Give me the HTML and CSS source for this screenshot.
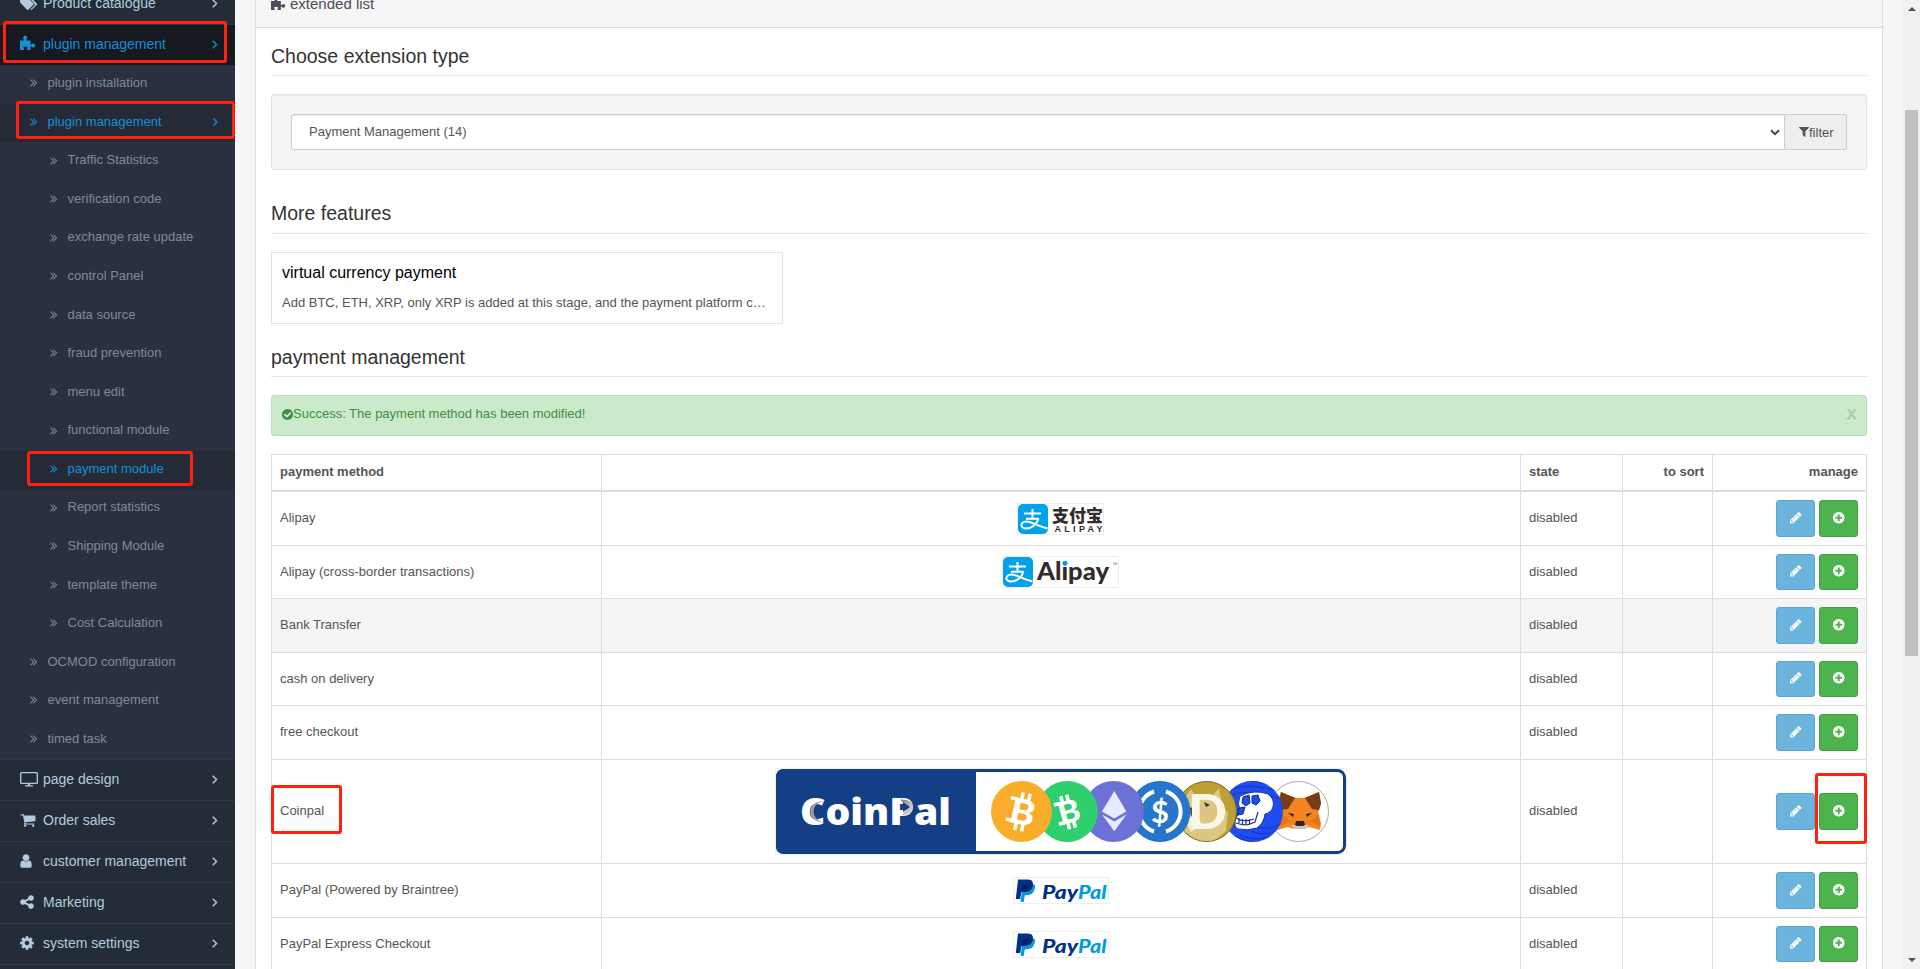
FILE: index.html
```html
<!DOCTYPE html>
<html lang="en">
<head>
<meta charset="utf-8">
<title>Extensions</title>
<link rel="stylesheet" href="styles.css">
</head>
<body>
<svg class="sprite" xmlns="http://www.w3.org/2000/svg">
  <symbol id="right" viewBox="0 0 1792 1792"><path stroke="currentColor" stroke-width="60" d="M1171 960q0 13-10 23l-466 466q-10 10-23 10t-23-10l-50-50q-10-10-10-23t10-23l393-393-393-393q-10-10-10-23t10-23l50-50q10-10 23-10t23 10l466 466q10 10 10 23z"/></symbol>
  <symbol id="dbl" viewBox="384 0 1024 1792"><path d="M979 960q0 13-10 23l-466 466q-10 10-23 10t-23-10l-50-50q-10-10-10-23t10-23l393-393-393-393q-10-10-10-23t10-23l50-50q10-10 23-10t23 10l466 466q10 10 10 23zm384 0q0 13-10 23l-466 466q-10 10-23 10t-23-10l-50-50q-10-10-10-23t10-23l393-393-393-393q-10-10-10-23t10-23l50-50q10-10 23-10t23 10l466 466q10 10 10 23z"/></symbol>
  <symbol id="filter" viewBox="192 0 1408 1792"><path d="M1595 295q17 41-14 70l-493 493v742q0 42-39 59-13 5-25 5-27 0-45-19l-256-256q-19-19-19-45v-486l-493-493q-31-29-14-70 17-39 59-39h1280q42 0 59 39z"/></symbol>
  <symbol id="pencil" viewBox="0 0 1792 1792"><path d="M491 1536l91-91-235-235-91 91v107h128v128h107zm523-928q0-22-22-22-10 0-17 7l-542 542q-7 7-7 17 0 22 22 22 10 0 17-7l542-542q7-7 7-17zm-54-192l416 416-832 832h-416v-416zm683 96q0 53-37 90l-166 166-416-416 166-165q36-38 90-38 53 0 91 38l235 234q37 39 37 91z"/></symbol>
  <symbol id="plus" viewBox="0 0 1792 1792"><path d="M1344 960v-128q0-26-19-45t-45-19h-256v-256q0-26-19-45t-45-19h-128q-26 0-45 19t-19 45v256h-256q-26 0-45 19t-19 45v128q0 26 19 45t45 19h256v256q0 26 19 45t45 19h128q26 0 45-19t19-45v-256h256q26 0 45-19t19-45zm320-64q0 209-103 385.500t-279.500 279.500-385.500 103-385.500-103-279.500-279.500-103-385.500 103-385.500 279.500-279.500 385.500-103 385.500 103 279.500 279.500 103 385.500z"/></symbol>
  <symbol id="check" viewBox="128 0 1536 1792"><path d="M1412 734q0-28-18-46l-91-90q-19-19-45-19t-45 19l-408 407-226-226q-19-19-45-19t-45 19l-91 90q-18 18-18 46 0 27 18 45l362 362q19 19 45 19 27 0 46-19l543-543q18-18 18-45zm252 162q0 209-103 385.500t-279.500 279.500-385.500 103-385.500-103-279.500-279.500-103-385.500 103-385.500 279.500-279.500 385.500-103 385.500 103 279.500 279.500 103 385.500z"/></symbol>
  <symbol id="user" viewBox="0 0 1792 1792"><path d="M1536 1399q0 109-62.500 187t-150.500 78h-854q-88 0-150.500-78t-62.500-187q0-85 8.500-160.500t31.500-152 58.500-131 94-89 134.500-34.500q131 128 313 128t313-128q76 0 134.500 34.500t94 89 58.500 131 31.500 152 8.500 160.500zm-256-887q0 159-112.500 271.500t-271.500 112.500-271.500-112.500-112.500-271.500 112.500-271.500 271.500-112.500 271.500 112.500 112.500 271.500z"/></symbol>
  <symbol id="cog" viewBox="0 0 1792 1792"><path d="M1152 896q0-106-75-181t-181-75-181 75-75 181 75 181 181 75 181-75 75-181zm512-109v222q0 12-8 23t-20 13l-185 28q-19 54-39 91 35 50 107 138 10 12 10 25t-9 23q-27 37-99 108t-94 71q-12 0-26-9l-138-108q-44 23-91 38-16 136-29 186-7 28-36 28h-222q-14 0-24.500-8.500t-11.500-21.500l-28-184q-49-16-90-37l-141 107q-10 9-25 9-14 0-25-11-126-114-165-168-7-10-7-23 0-12 8-23 15-21 51-66.500t54-70.500q-27-50-41-99l-183-27q-13-2-21-12.500t-8-23.500v-222q0-12 8-23t19-13l186-28q14-46 39-92-40-57-107-138-10-12-10-24 0-10 9-23 26-36 98.500-107.500t94.500-71.500q13 0 26 10l138 107q44-23 91-38 16-136 29-186 7-28 36-28h222q14 0 24.500 8.500t11.500 21.500l28 184q49 16 90 37l142-107q9-9 24-9 13 0 25 10 129 119 165 170 7 8 7 22 0 12-8 23-15 21-51 66.500t-54 70.500q26 50 41 98l183 28q13 2 21 12.500t8 23.500z"/></symbol>
  <symbol id="share" viewBox="0 0 1792 1792"><path d="M1344 1024q133 0 226.500 93.500t93.500 226.500-93.500 226.500-226.500 93.500-226.500-93.500-93.500-226.500q0-12 2-34l-360-180q-92 86-218 86-133 0-226.500-93.500t-93.500-226.500 93.500-226.500 226.500-93.500q126 0 218 86l360-180q-2-22-2-34 0-133 93.500-226.500t226.500-93.500 226.500 93.500 93.500 226.500-93.500 226.500-226.500 93.500q-126 0-218-86l-360 180q2 22 2 34t-2 34l360 180q92-86 218-86z"/></symbol>
  <symbol id="cart" viewBox="0 0 1792 1792"><path d="M704 1536q0 52-38 90t-90 38-90-38-38-90 38-90 90-38 90 38 38 90zm896 0q0 52-38 90t-90 38-90-38-38-90 38-90 90-38 90 38 38 90zm128-1088v512q0 24-16.500 42.500t-40.500 21.500l-1044 122q13 60 13 70 0 16-24 64h920q26 0 45 19t19 45-19 45-45 19h-1024q-26 0-45-19t-19-45q0-11 8-31.500t16-36 21.500-40 15.500-29.500l-177-823h-204q-26 0-45-19t-19-45 19-45 45-19h256q16 0 28.500 6.500t19.500 15.500 13 24.500 8 26 5.500 29.500 4.500 26h1201q26 0 45 19t19 45z"/></symbol>
  <symbol id="tv" viewBox="0 0 18 16"><path fill-rule="evenodd" d="M1.500 1h15A1.500 1.500 0 0 1 18 2.500v9a1.500 1.500 0 0 1-1.500 1.500H10v1.200h3V15.500H5V14.200h3V13H1.500A1.500 1.500 0 0 1 0 11.500v-9A1.500 1.500 0 0 1 1.500 1zM1.300 2.300v9.400h15.400V2.300z"/></symbol>
  <symbol id="puzzle" viewBox="0 0 16 16"><path d="M0 5.400h3.800V4.200C3 3.600 2.900 2.800 3.300 2.100 3.700 1.200 4.300.8 5.200.8s1.600.4 1.900 1.200c.3.800.1 1.500-.6 2.200v1.200h4v4.100h1.100c.7-.9 1.500-1.100 2.400-.8.800.3 1.200.9 1.200 1.800s-.5 1.600-1.300 1.900c-.9.300-1.700 0-2.300-.8h-1.100V15H7c-.3-.4-.2-.8.200-1.300.5-.6.500-1.200 0-1.700-.5-.4-1.100-.6-1.900-.6-.7 0-1.400.2-1.700.7-.4.500-.3 1.100.2 1.600.4.500.5.900.2 1.300H0z"/></symbol>
  <symbol id="tags" viewBox="0 0 18 16"><path d="M0 2.500Q0 1.500 1 1.500h4.500q1 0 1.700.7l6 6q.9.900 0 1.700l-4.700 4.600q-.8.800-1.700 0L.8 8.300Q0 7.500 0 6.500z"/><path d="M8 1.500h.5q1 0 1.700.7l6.500 6.200q.8.800 0 1.600l-4.700 4.600q-1 .9-1.800.1l4.200-4.100q.9-.9 0-1.800z"/></symbol>
  <symbol id="alimark" viewBox="0 0 30 30">
    <rect width="30" height="30" rx="5" fill="#02a2ea"/>
    <g fill="none" stroke="#fff" stroke-width="2"><path d="M6 9.500h17M14.500 5v10M8 14.700h12.500"/><path d="M20.500 14.500C19 20 14 24.500 8.500 24.500c-4 0-5.500-2-5-4 .5-2.500 4-3.800 8-2.500 5 1.500 10 4.500 18 6.500"/></g>
  </symbol>
  <symbol id="paypal" viewBox="0 0 96 27">
    <rect x=".5" y=".5" width="95" height="26" fill="#fff" stroke="#eee"/>
    <path fill="#009cde" d="M8 25l2.700-18h8q4 .5 2.800 5-1.300 6.200-8 6.200h-2L10.300 25z"/>
    <path fill="#009cde" d="M7.500 24.500L9.600 11H18q4-1 3.300-4.800 1.200 2 .3 5.300-1.500 6.300-8.300 6.300h-1.600l-.8 6.700z"/>
    <path fill="#003087" d="M5 2.500h9.500q6.500 0 5.300 6-1.200 6.300-8 6.300H8.600L7.200 22H2.800z"/>
    <path fill="#012169" d="M9.500 8h10.200q-.6 6.800-8 6.800H8.600z"/>
    <text x="29" y="21.500" class="pp" fill="#003087" textLength="36" lengthAdjust="spacingAndGlyphs">Pay</text>
    <text x="65" y="21.500" class="pp" fill="#009cde" textLength="28.500" lengthAdjust="spacingAndGlyphs">Pal</text>
  </symbol>
</svg>

<div class="app">
  <nav class="sidebar">
    <ul class="menu">
      <li class="top"><a><svg class="ti"><use href="#tags"/></svg>Product catalogue<svg class="arr"><use href="#right"/></svg></a></li>
      <li class="top active"><a><svg class="ti pz"><use href="#puzzle"/></svg>plugin management<svg class="arr"><use href="#right"/></svg></a><i class="mark mark-top"></i>
        <ul class="sub">
          <li><a><svg class="dbl"><use href="#dbl"/></svg>plugin installation</a></li>
          <li class="on"><a><svg class="dbl"><use href="#dbl"/></svg>plugin management<svg class="arr"><use href="#right"/></svg></a><i class="mark mark-sub"></i></li>
          <li class="deep"><a><svg class="dbl"><use href="#dbl"/></svg>Traffic Statistics</a></li>
          <li class="deep"><a><svg class="dbl"><use href="#dbl"/></svg>verification code</a></li>
          <li class="deep"><a><svg class="dbl"><use href="#dbl"/></svg>exchange rate update</a></li>
          <li class="deep"><a><svg class="dbl"><use href="#dbl"/></svg>control Panel</a></li>
          <li class="deep"><a><svg class="dbl"><use href="#dbl"/></svg>data source</a></li>
          <li class="deep"><a><svg class="dbl"><use href="#dbl"/></svg>fraud prevention</a></li>
          <li class="deep"><a><svg class="dbl"><use href="#dbl"/></svg>menu edit</a></li>
          <li class="deep"><a><svg class="dbl"><use href="#dbl"/></svg>functional module</a></li>
          <li class="deep on"><a><svg class="dbl"><use href="#dbl"/></svg>payment module</a><i class="mark mark-pay"></i></li>
          <li class="deep"><a><svg class="dbl"><use href="#dbl"/></svg>Report statistics</a></li>
          <li class="deep"><a><svg class="dbl"><use href="#dbl"/></svg>Shipping Module</a></li>
          <li class="deep"><a><svg class="dbl"><use href="#dbl"/></svg>template theme</a></li>
          <li class="deep"><a><svg class="dbl"><use href="#dbl"/></svg>Cost Calculation</a></li>
          <li><a><svg class="dbl"><use href="#dbl"/></svg>OCMOD configuration</a></li>
          <li><a><svg class="dbl"><use href="#dbl"/></svg>event management</a></li>
          <li><a><svg class="dbl"><use href="#dbl"/></svg>timed task</a></li>
        </ul>
      </li>
      <li class="top"><a><svg class="ti"><use href="#tv"/></svg>page design<svg class="arr"><use href="#right"/></svg></a></li>
      <li class="top"><a><svg class="ti fa"><use href="#cart"/></svg>Order sales<svg class="arr"><use href="#right"/></svg></a></li>
      <li class="top"><a><svg class="ti fa usr"><use href="#user"/></svg>customer management<svg class="arr"><use href="#right"/></svg></a></li>
      <li class="top"><a><svg class="ti fa shr"><use href="#share"/></svg>Marketing<svg class="arr"><use href="#right"/></svg></a></li>
      <li class="top"><a><svg class="ti fa shr"><use href="#cog"/></svg>system settings<svg class="arr"><use href="#right"/></svg></a></li>
      <li class="top"><a></a></li>
    </ul>
  </nav>

  <main class="content">
    <section class="panel">
      <header class="heading"><svg class="hi"><use href="#puzzle"/></svg>extended list</header>
      <div class="body">
        <h2 class="legend">Choose extension type</h2>
        <div class="well">
          <div class="select">Payment Management (14)<svg class="caret" viewBox="0 0 10 7"><path d="M1 1.200l4 4 4-4" fill="none" stroke="#444" stroke-width="2"/></svg></div>
          <div class="filter"><svg><use href="#filter"/></svg>filter</div>
        </div>
        <h2 class="legend l2">More features</h2>
        <div class="card">
          <h4>virtual currency payment</h4>
          <p>Add BTC, ETH, XRP, only XRP is added at this stage, and the payment platform c…</p>
        </div>
        <h2 class="legend l3">payment management</h2>
        <div class="alert"><svg><use href="#check"/></svg><span>Success: The payment method has been modified!</span><b>x</b></div>
        <table>
          <colgroup><col class="c1"><col class="c2"><col class="c3"><col class="c4"><col class="c5"></colgroup>
          <thead><tr><th>payment method</th><th></th><th>state</th><th class="r">to sort</th><th class="r">manage</th></tr></thead>
          <tbody>
            <tr class="h54"><td>Alipay</td><td class="logo odd"><svg width="87" height="32" viewBox="0 0 87 32"><rect x=".5" y=".5" width="86" height="31" fill="#fff" stroke="#eee"/><use href="#alimark" x="1" y="1" width="30" height="30"/><text x="35" y="19" class="cjk" textLength="51" lengthAdjust="spacingAndGlyphs">支付宝</text><text x="37.500" y="29" class="lat" textLength="48">ALIPAY</text></svg></td><td>disabled</td><td></td><td class="r"><span class="btn edit"><svg><use href="#pencil"/></svg></span><span class="btn add"><svg><use href="#plus"/></svg></span></td></tr>
            <tr class="h53"><td>Alipay (cross-border transactions)</td><td class="logo odd"><svg width="117" height="32" viewBox="0 0 117 32"><rect x=".5" y=".5" width="116" height="31" fill="#fff" stroke="#eee"/><use href="#alimark" x="1" y="1" width="30" height="30"/><text x="35" y="23.500" class="ali" textLength="72" lengthAdjust="spacingAndGlyphs">Alipay</text><circle cx="63" cy="7.500" r="2.400" fill="#02a2ea"/><text x="110.500" y="10" class="tm">™</text></svg></td><td>disabled</td><td></td><td class="r"><span class="btn edit"><svg><use href="#pencil"/></svg></span><span class="btn add"><svg><use href="#plus"/></svg></span></td></tr>
            <tr class="h54 hover"><td>Bank Transfer</td><td></td><td>disabled</td><td></td><td class="r"><span class="btn edit"><svg><use href="#pencil"/></svg></span><span class="btn add"><svg><use href="#plus"/></svg></span></td></tr>
            <tr class="h53"><td>cash on delivery</td><td></td><td>disabled</td><td></td><td class="r"><span class="btn edit"><svg><use href="#pencil"/></svg></span><span class="btn add"><svg><use href="#plus"/></svg></span></td></tr>
            <tr class="h54"><td>free checkout</td><td></td><td>disabled</td><td></td><td class="r"><span class="btn edit"><svg><use href="#pencil"/></svg></span><span class="btn add"><svg><use href="#plus"/></svg></span></td></tr>
            <tr class="h104"><td class="rel">Coinpal<i class="mark mark-coin"></i></td><td class="logo">
              <svg width="572" height="87" viewBox="0 0 572 87">
                <defs>
                  <linearGradient id="sh" x1="0" x2="1" y1="0" y2="1"><stop offset="0" stop-color="#777"/><stop offset="1" stop-color="#eee"/></linearGradient>
                  <clipPath id="doge"><circle cx="431.500" cy="43.500" r="29.500"/></clipPath>
                  <clipPath id="ape"><circle cx="477.500" cy="43.500" r="30.500"/></clipPath>
                </defs>
                <rect x=".5" y=".5" width="571" height="86" fill="#fff" stroke="#eee"/>
                <rect x="2.500" y="2.500" width="567" height="82" rx="7" fill="#fff" stroke="#153f85" stroke-width="3"/>
                <path d="M9 1h192v85H9q-8 0-8-8V9q0-8 8-8z" fill="#153f85"/>
                <text x="25" y="57" class="coin" textLength="151" lengthAdjust="spacingAndGlyphs">CoinPal</text>
                <path d="M48 33Q35.500 34 35.500 43.500T48 54.500Q38.500 51 38.500 43.500T48 33z" fill="#9a9fa8"/>
                <path d="M125 31.500q13-.5 13 8 0 7.500-11 7.500l6-7.500z" fill="url(#sh)"/>
                <path d="M128 34l7 5-7 5z" fill="#153f85"/>
                <circle cx="523.500" cy="43.500" r="30" fill="#fff" stroke="#aaa"/>
                <path d="M506 24l15 6h8l15-6 2 12-3 9 3 10-1 7-11-3-6 2h-9l-6-2-11 3-1-7 3-10-3-9z" fill="#f5841f"/>
                <path d="M506 24l14 6-7 11-7 1-2-7zM544 24l-14 6 7 11 7 1 2-7z" fill="#763d16"/>
                <path d="M516 57h18l-3 4h-12z" fill="#d7c1b3"/><path d="M521 53h8l1 4-2 1h-6l-2-1zM513 45l6 1-1 3zM537 45l-6 1 1 3z" fill="#292929"/>
                <path d="M506 46l9 7-10 6zM544 46l-9 7 10 6z" fill="#e2761b"/>
                <circle cx="477.500" cy="43.500" r="30.500" fill="#1f4cf0"/>
                <g clip-path="url(#ape)" fill="none" stroke="#1636b8"><path d="M450 20q20-14 55 0M448 26q20-15 60-1M447 32q20-15 62 0M480 58q14 7 30-5M476 63q16 8 32-5M465 67q20 10 40-4M455 66q25 14 45 5"/></g>
                <path d="M465 28q14-7 28-2 7 5 5 13-2 6-8 7-1 9-8 14-9 3-19 1-5-2-2-11l4-7q-3-8 0-15z" fill="#fff" stroke="#1338a8"/>
                <path d="M468 29l6-2 1 8-4 3-4-3zM477 28l6-1 2 6-4 4-4-2zM464 40l6-1-2 7-5 1z" fill="#1f4cf0" stroke="#0d2b91"/>
                <path d="M461 50q8 5 18 1M464 50v5m3.500-4v5m3.500-5v5m3.500-5v5M461 55q10 4 19-1l3-10" fill="none" stroke="#17318f" stroke-width="1.200"/>
                <circle cx="431.500" cy="43.500" r="30" fill="#bca033" stroke="#80661c"/>
                <g clip-path="url(#doge)"><path d="M410 30l6-9 5 9 14 1 9-11 3 17 6 8-2 18-22 18-25-6-10-20 8-12z" fill="#dcc683"/><path d="M410 52l9-8 8 12-11 8z" fill="#f6edd2"/><path d="M415 40l5-2v5l-4 6zM429 34l6 3-4 2z" fill="#333"/></g>
                <text x="413" y="61" class="doge-d" textLength="39" lengthAdjust="spacingAndGlyphs">D</text>
                <circle cx="385" cy="43.500" r="30.500" fill="#2775ca"/>
                <path d="M379 23.500a21 21 0 0 0 0 40M391 23.500a21 21 0 0 1 0 40" fill="none" stroke="#fff" stroke-width="4"/>
                <text x="385" y="54.500" class="usd">$</text>
                <circle cx="338.500" cy="43.500" r="30.500" fill="#6c72d5"/>
                <path d="M339.300 23l12 20.500-12 7-12.300-7z" fill="#e8ebff"/><path d="M327 46.500l12.300 7 12.200-7-12.200 16.800z" fill="#e8ebff"/>
                <circle cx="292.300" cy="43.500" r="30.500" fill="#2fcf6f"/>
                <g transform="rotate(-15 293 43.500)" class="bsym"><text x="283" y="55" textLength="22" lengthAdjust="spacingAndGlyphs">B</text><path d="M290 27v7m6-7v7M290 54v7m6-7v7M281 33.500h6M281 53.500h6"/></g>
                <circle cx="246.500" cy="43.500" r="30.500" fill="#f9ad2b"/>
                <g transform="rotate(13 247 43.500)" class="bsym big"><text x="235.500" y="56.500" textLength="25" lengthAdjust="spacingAndGlyphs">B</text><path d="M244 24.500v7m7-7v7M244 55v8m7-8v8M233 32.500h7M233 54.500h7"/></g>
              </svg></td><td>disabled</td><td></td><td class="r rel"><span class="btn edit"><svg><use href="#pencil"/></svg></span><span class="btn add"><svg><use href="#plus"/></svg></span><i class="mark mark-add"></i></td></tr>
            <tr class="h54"><td>PayPal (Powered by Braintree)</td><td class="logo"><svg width="96" height="27"><use href="#paypal"/></svg></td><td>disabled</td><td></td><td class="r"><span class="btn edit"><svg><use href="#pencil"/></svg></span><span class="btn add"><svg><use href="#plus"/></svg></span></td></tr>
            <tr class="h53"><td>PayPal Express Checkout</td><td class="logo"><svg width="96" height="27"><use href="#paypal"/></svg></td><td>disabled</td><td></td><td class="r"><span class="btn edit"><svg><use href="#pencil"/></svg></span><span class="btn add"><svg><use href="#plus"/></svg></span></td></tr>
          </tbody>
        </table>
      </div>
    </section>
  </main>
  <div class="scrollbar"><svg viewBox="0 0 8 4"><path d="M0 4l4-4 4 4z"/></svg><div class="thumb"></div><svg class="down" viewBox="0 0 8 4"><path d="M0 0l4 4 4-4z"/></svg></div>
</div>
</body>
</html>
```
FILE: styles.css
```css
* { box-sizing: border-box; }
html, body { height: 100%; }
body {
  margin: 0;
  overflow: hidden;
  font: 13px/18.57px "Liberation Sans", Arial, sans-serif;
  color: #555;
  background: #f6f6f6;
}
ul { list-style: none; margin: 0; padding: 0; }
h2, h4, p { margin: 0; font-weight: normal; }
svg { fill: currentColor; flex: none; }
.sprite { display: none; }
.app { display: flex; height: 969px; overflow: hidden; }

/* Sidebar */
.sidebar { width: 235px; flex: none; background: #242d37; overflow: hidden; }
.menu { margin-top: -17px; }
.top { border-top: 1px solid #2c3843; position: relative; }
.top > a {
  display: flex; align-items: center; height: 40px; padding: 0 13px 2px 20px;
  font-size: 14px; color: #b3cbdd;
}
.top.active > a { background: #16191f; color: #148fd8; height: 40.2px; }
.ti { width: 18px; height: 16px; margin-right: 5px; }
.ti.pz { width: 16px; height: 16px; margin: -3px 7px 0 0; }
.ti.fa { width: 16px; height: 16px; margin-right: 7px; }
.ti.usr { margin: 0 9px 0 -2px; }
.ti.shr { width: 16px; height: 16px; margin: 0 8px 0 -1px; }
.arr { width: 14px; height: 14px; margin-left: auto; }
.sub { background: #2a303f; }
.sub li { position: relative; }
.sub a {
  display: flex; align-items: center; height: 38.57px; padding: 0 13px 2px 30px; color: #7d8b99;
}
.sub .deep a { padding-left: 50px; }
.sub .on > a { background: #242b36; color: #148fd8; }
.dbl { width: 7.500px; height: 13px; margin: -1px 10px 0 0; }
.sub .arr { width: 13px; height: 13px; margin-top: -1px; }

/* Red annotation frames */
.mark { position: absolute; border: 3px solid #ff2010; border-radius: 3px; z-index: 2; }
.mark-top { left: 3px; top: -4px; width: 224px; height: 42px; }
.mark-sub { left: 16px; top: -2.500px; width: 219px; height: 38px; }
.mark-pay { left: 27px; top: 0; width: 166px; height: 35px; }
.mark-coin { left: -1px; top: 25px; width: 71px; height: 49px; }
.mark-add { right: -1px; top: 13px; width: 52px; height: 71px; }

/* Content panel */
.content { flex: 1; padding: 0 20px; overflow: hidden; }
.panel { border: 1px solid #dcdcdc; border-width: 0 1px; background: #fff; height: 100%; }
.heading {
  display: flex; align-items: center; height: 28px; padding: 0 15px 18px;
  border-bottom: 1px solid #dcdcdc; background: #f6f6f6; font-size: 15px; color: #4c4d5a;
}
.hi { width: 15px; height: 15px; margin: -3px 4px 0 0; }
.body { padding: 15px; }
.legend {
  height: 33px; padding-top: 2px; font-size: 19.500px; line-height: 23px; color: #333;
  border-bottom: 1px solid #e5e5e5; margin-bottom: 18px;
}
.well {
  display: flex; height: 76px; padding: 19px; background: #f5f5f5;
  border: 1px solid #e3e3e3; border-radius: 3px; box-shadow: inset 0 1px 1px rgba(0,0,0,.05);
}
.select {
  flex: 1; display: flex; align-items: center; height: 36px; padding: 0 4px 0 17px;
  border: 1px solid #ccc; border-radius: 3px 0 0 3px; background: #fff;
  box-shadow: inset 0 1px 1px rgba(0,0,0,.075);
}
.caret { width: 10px; height: 7px; margin-left: auto; }
.filter {
  display: flex; align-items: center; width: 62px; height: 36px; padding-left: 14px; padding-top: 2px;
  border: 1px solid #ccc; border-left: 0; border-radius: 0 3px 3px 0; background: #eee;
}
.filter svg { width: 10px; height: 13px; margin-top: -3px; }
.legend.l2 { margin-top: 31px; padding-top: 1px; }
.card { width: 512px; height: 72px; border: 1px solid #e3e3e3; padding: 10px 9px 0 10px; }
.card h4 { font-size: 16px; line-height: 20px; color: #000; }
.card p { margin-top: 11px; white-space: nowrap; overflow: hidden; }
.legend.l3 { margin-top: 20px; }
.alert {
  display: flex; align-items: flex-start; height: 41px; padding: 9px 9px 0 10px;
  background: #cbeacb; border: 1px solid #b9e1b9; border-radius: 3px; color: #3c8f40;
}
.alert svg { width: 11px; height: 13px; margin-top: 3px; }
.alert b { margin-left: auto; font-size: 19.500px; line-height: 16px; color: #a9d1a9; text-shadow: 0 1px 0 #e3f5e3; }

/* Table */
table { width: 1596px; margin-top: 18px; table-layout: fixed; border-collapse: separate; border-spacing: 0; border: 1px solid #ddd; border-width: 1px 0 0 1px; }
.c1 { width: 330px; } .c2 { width: 919px; } .c3 { width: 102px; } .c4 { width: 90px; } .c5 { width: 154px; }
th, td { border: 1px solid #ddd; border-width: 0 1px 1px 0; padding: 0 8px; text-align: left; vertical-align: middle; }
th { height: 37px; border-bottom-width: 2px; padding-bottom: 1px; }
.r { text-align: right; }
.rel { position: relative; }
.h53 td { height: 53px; } .h54 td { height: 54px; } .h104 td { height: 104px; }
.hover td { background: #f5f5f5; }
.logo { padding: 0; text-align: center; }
.logo svg { display: block; margin: 0 auto; }
.logo.odd { padding-right: 2px; }
.btn {
  display: inline-flex; align-items: center; justify-content: center; vertical-align: middle;
  width: 39px; height: 36.570px; border: 1px solid; border-radius: 3px; color: #fff;
}
.btn svg { width: 13.500px; height: 13.500px; margin-top: -2px; }
.edit { background: #6bb4de; border-color: #5fa4cc; }
.add { background: #4db34d; border-color: #439e43; margin-left: 4px; }

/* Logo lettering */
.cjk { font: 900 17px "Noto Sans CJK SC", sans-serif; fill: #332c2b; }
.lat { font: bold 9px "Liberation Sans", sans-serif; fill: #332c2b; }
.ali { font: 900 24px Lato, sans-serif; fill: #332c2b; }
.tm { font: 5px "Liberation Sans", sans-serif; fill: #555; }
.pp { font: italic 900 19.500px Lato, sans-serif; }
.coin { font: 800 37px "Open Sans", sans-serif; fill: #fff; }
.doge-d { font: 900 48px Lato, sans-serif; fill: #fbf6e6; }
.usd { font: bold 31px Lato, sans-serif; fill: #fff; text-anchor: middle; }
.bsym { font: 900 31px Lato, sans-serif; fill: #fff; stroke: #fff; }
.bsym text { stroke: none; }
.bsym path { stroke-width: 3.500; fill: none; }
.bsym.big { font-size: 35px; }

/* Scrollbar */
.scrollbar { display: flex; flex-direction: column; align-items: center; width: 17px; background: #f1f1f1; }
.scrollbar svg { width: 8px; height: 4px; margin-top: 7px; fill: #505050; }
.thumb { width: 13px; height: 546px; margin-top: 99px; background: #c1c1c1; }
.scrollbar .down { margin: auto 0 7px; }
```
